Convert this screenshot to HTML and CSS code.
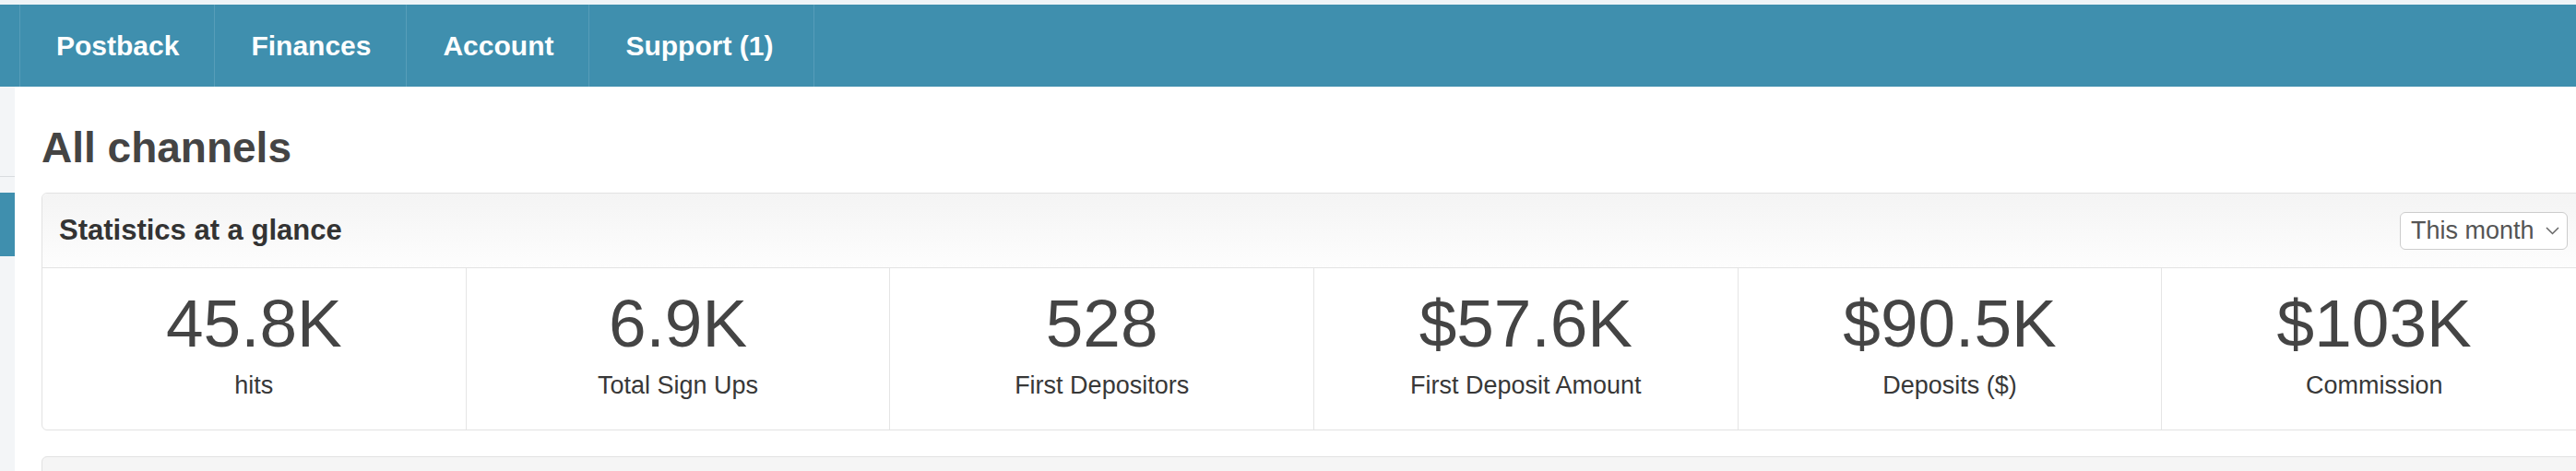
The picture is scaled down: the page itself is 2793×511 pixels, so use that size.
FILE: index.html
```html
<!DOCTYPE html>
<html lang="en">
<head>
  <meta charset="UTF-8" />
  <title>All channels</title>
  <link rel="stylesheet" href="styles.css">
</head>
<body>
  <div class="topline"></div>
  <!-- Navigation -->
  <nav class="navbar">
    <a href="#" class="nav-item">Postback</a>
    <a href="#" class="nav-item">Finances</a>
    <a href="#" class="nav-item">Account</a>
    <a href="#" class="nav-item">Support (1)</a>
  </nav>
  <div class="layout">
    <!-- Sidebar (collapsed) -->
    <aside class="sidebar">
      <div class="side-item"></div>
      <div class="side-item active"></div>
    </aside>
    <main class="main">
      <h1>All channels</h1>
      <!-- Stats card -->
      <section class="card">
        <div class="card-header">
          <h2>Statistics at a glance</h2>
          <div class="period-select">
            <span>This month</span>
            <svg width="15" height="9" viewBox="0 0 15 9"><polyline points="1,1 7.5,7.5 14,1" fill="none" stroke="#666" stroke-width="1.5"/></svg>
          </div>
        </div>
        <div class="stats">
          <div class="stat"><div class="stat-value">45.8K</div><div class="stat-label">hits</div></div>
          <div class="stat"><div class="stat-value">6.9K</div><div class="stat-label">Total Sign Ups</div></div>
          <div class="stat"><div class="stat-value">528</div><div class="stat-label">First Depositors</div></div>
          <div class="stat"><div class="stat-value">$57.6K</div><div class="stat-label">First Deposit Amount</div></div>
          <div class="stat"><div class="stat-value">$90.5K</div><div class="stat-label">Deposits ($)</div></div>
          <div class="stat"><div class="stat-value">$103K</div><div class="stat-label">Commission</div></div>
        </div>
      </section>
      <section class="card card-muted"></section>
    </main>
  </div>
</body>
</html>
```
FILE: styles.css
```css
/* Reset */
* {
  margin: 0;
  padding: 0;
  box-sizing: border-box;
}
body {
  font-family: "Liberation Sans", Arial, sans-serif;
  background-color: #fff;
  color: #444;
  overflow: hidden;
}
a {
  text-decoration: none;
}
.topline {
  height: 5px;
  background-color: #eef4f7;
}
/* Navbar */
.navbar {
  display: flex;
  height: 89px;
  padding-left: 21px;
  background-color: #3f8fae;
}
.nav-item {
  display: flex;
  align-items: center;
  padding: 0 38px 0 39px;
  border-left: 1px solid #579db9;
  color: #fff;
  font-size: 30px;
  font-weight: bold;
}
.nav-item:last-child {
  padding-right: 44px;
  border-right: 1px solid #579db9;
}
/* Layout */
.layout {
  display: flex;
}
.sidebar {
  width: 16px;
  flex-shrink: 0;
  min-height: 420px;
  background-color: #f3f5f7;
}
.side-item {
  height: 98px;
  border-bottom: 1px solid #d9dcdf;
}
.side-item.active {
  height: 69px;
  margin-top: 17px;
  border-bottom: none;
  background-color: #3f8fae;
}
.main {
  flex: 1;
  padding-left: 29px;
}
h1 {
  margin: 40px 0 23px;
  font-size: 46px;
  line-height: 52px;
  color: #444;
}
/* Cards */
.card {
  margin-right: -12px;
  border: 1px solid #e2e2e2;
  border-radius: 6px;
  background-color: #fff;
}
.card-muted {
  height: 100px;
  margin-top: 28px;
  background-color: #f5f5f5;
}
.card-header {
  display: flex;
  justify-content: space-between;
  align-items: center;
  height: 81px;
  padding: 0 20px 0 18px;
  border-bottom: 1px solid #e2e2e2;
  border-radius: 6px 6px 0 0;
  background: linear-gradient(#f4f4f4, #fdfdfd);
}
.card-header h2 {
  font-size: 31px;
  color: #333;
}
.period-select {
  display: flex;
  justify-content: space-between;
  align-items: center;
  width: 182px;
  height: 41px;
  padding: 0 8px 0 11px;
  border: 1px solid #ccc;
  border-radius: 6px;
  background-color: #fff;
  font-size: 27px;
  color: #555;
}
/* Stats */
.stats {
  display: grid;
  grid-template-columns: repeat(6, 1fr);
}
.stat {
  padding: 20px 0 33px;
  border-right: 1px solid #e5e5e5;
  text-align: center;
}
.stat:last-child {
  border-right: none;
}
.stat-value {
  font-size: 73px;
  line-height: 80px;
  color: #444;
}
.stat-label {
  margin-top: 12px;
  font-size: 27px;
  line-height: 30px;
  color: #383838;
}
```
